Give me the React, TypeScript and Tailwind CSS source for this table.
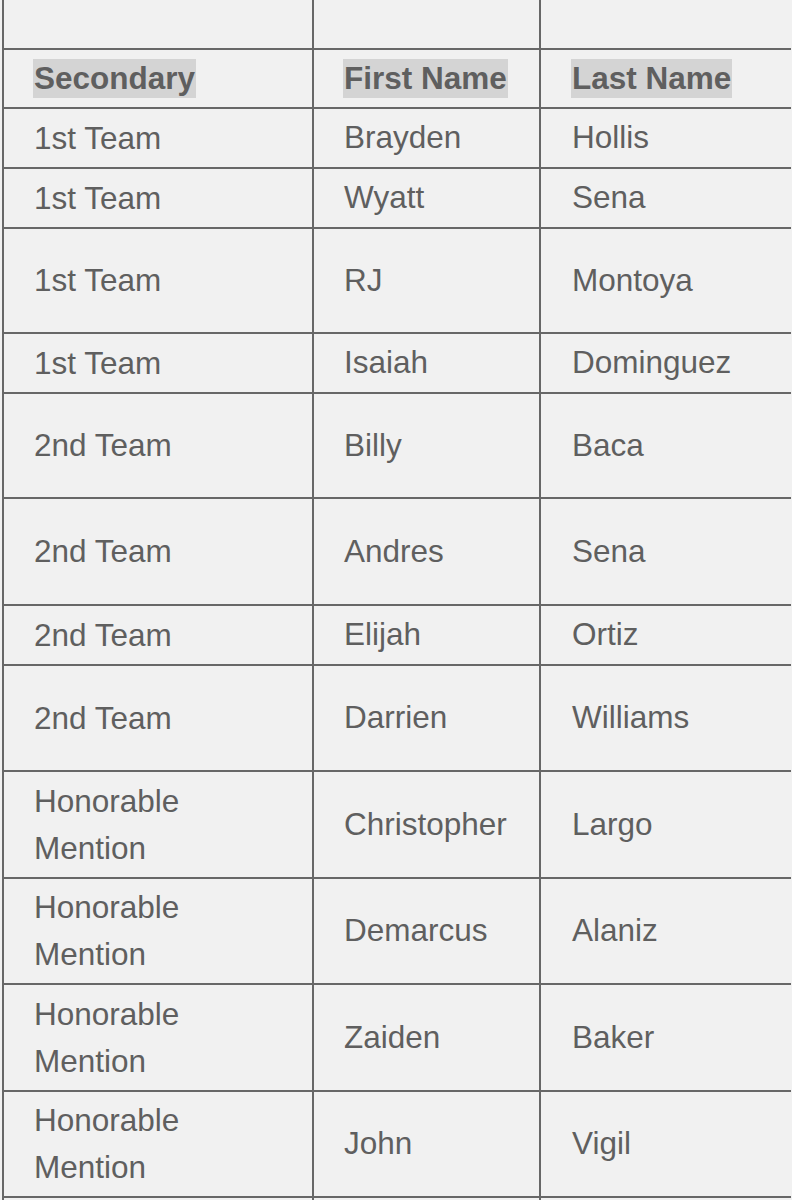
// Secondary all-league roster table

type Row = { pos: string; first: string; last: string; h: string };

const rows: Row[] = [
  { pos: '1st Team', first: 'Brayden', last: 'Hollis', h: 'h-[60px]' },
  { pos: '1st Team', first: 'Wyatt', last: 'Sena', h: 'h-[60px]' },
  { pos: '1st Team', first: 'RJ', last: 'Montoya', h: 'h-[105px]' },
  { pos: '1st Team', first: 'Isaiah', last: 'Dominguez', h: 'h-[60px]' },
  { pos: '2nd Team', first: 'Billy', last: 'Baca', h: 'h-[105px]' },
  { pos: '2nd Team', first: 'Andres', last: 'Sena', h: 'h-[107px]' },
  { pos: '2nd Team', first: 'Elijah', last: 'Ortiz', h: 'h-[60px]' },
  { pos: '2nd Team', first: 'Darrien', last: 'Williams', h: 'h-[106px]' },
  { pos: 'Honorable Mention', first: 'Christopher', last: 'Largo', h: 'h-[107px]' },
  { pos: 'Honorable Mention', first: 'Demarcus', last: 'Alaniz', h: 'h-[106px]' },
  { pos: 'Honorable Mention', first: 'Zaiden', last: 'Baker', h: 'h-[107px]' },
  { pos: 'Honorable Mention', first: 'John', last: 'Vigil', h: 'h-[106px]' },
];

const cols = 'grid grid-cols-[310px_227px_250px]';
const firstCell = 'flex items-center pl-[30px] pr-1 border-r-2 border-[#676767]';
const cell = 'flex items-center pl-[30px] pr-1 border-r-2 border-[#676767] whitespace-nowrap';
const lastCell = 'flex items-center pl-[31px] pr-1 whitespace-nowrap';

function Label({ children }: { children: string }) {
  return (
    <span className="bg-[#d4d4d4] font-bold leading-[39px] px-px -ml-px whitespace-nowrap">
      {children}
    </span>
  );
}

export default function App() {
  return (
    <div
      className="w-[792px] h-[1200px] overflow-hidden bg-[#f1f1f1] text-[#5f5f5f] text-[31.5px]"
      style={{ fontFamily: '"Liberation Sans", Arial, sans-serif' }}
    >
      <div className="ml-[2px] w-[789px] border-l-2 border-[#676767]">
        {/* top spacer row */}
        <div className={`${cols} h-[50px] border-b-2 border-[#676767]`}>
          <div className={cell} />
          <div className={cell} />
          <div className={lastCell} />
        </div>

        {/* header */}
        <div className={`${cols} h-[59px] border-b-2 border-[#676767]`}>
          <div className={cell}><Label>Secondary</Label></div>
          <div className={cell}><Label>First Name</Label></div>
          <div className={lastCell}><Label>Last Name</Label></div>
        </div>

        {rows.map((r, i) => (
          <div key={i} className={`${cols} border-b-2 border-[#676767] ${r.h}`}>
            <div className={firstCell}>
              <span className="block w-[170px] leading-[47px]">{r.pos}</span>
            </div>
            <div className={cell}>{r.first}</div>
            <div className={lastCell}>{r.last}</div>
          </div>
        ))}

        <div className={`${cols} h-[40px]`}>
          <div className={cell} />
          <div className={cell} />
          <div className={lastCell} />
        </div>
      </div>
    </div>
  );
}
